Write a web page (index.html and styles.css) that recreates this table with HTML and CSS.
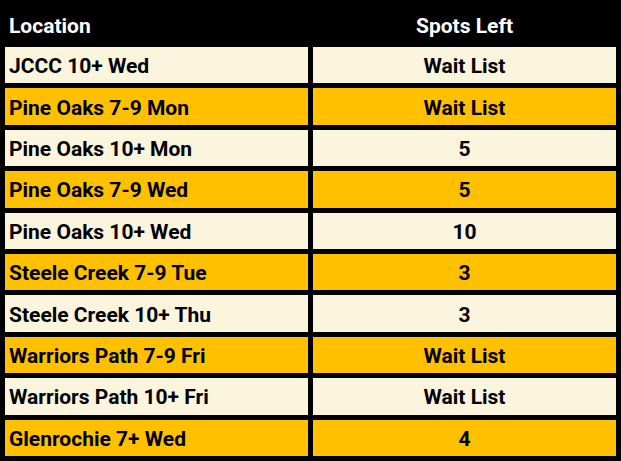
FILE: index.html
```html
<!DOCTYPE html>
<html>
<head>
<meta charset="utf-8">
<link rel="stylesheet" href="styles.css">
</head>
<body>
<div class="table">
  <div class="th left">Location</div>
  <div class="th center">Spots Left</div>

  <div class="td left light">JCCC 10+ Wed</div>
  <div class="td center light">Wait List</div>

  <div class="td left amber">Pine Oaks 7-9 Mon</div>
  <div class="td center amber">Wait List</div>

  <div class="td left light">Pine Oaks 10+ Mon</div>
  <div class="td center light">5</div>

  <div class="td left amber">Pine Oaks 7-9 Wed</div>
  <div class="td center amber">5</div>

  <div class="td left light">Pine Oaks 10+ Wed</div>
  <div class="td center light">10</div>

  <div class="td left amber">Steele Creek 7-9 Tue</div>
  <div class="td center amber">3</div>

  <div class="td left light">Steele Creek 10+ Thu</div>
  <div class="td center light">3</div>

  <div class="td left amber">Warriors Path 7-9 Fri</div>
  <div class="td center amber">Wait List</div>

  <div class="td left light">Warriors Path 10+ Fri</div>
  <div class="td center light">Wait List</div>

  <div class="td left amber">Glenrochie 7+ Wed</div>
  <div class="td center amber">4</div>
</div>
</body>
</html>
```
FILE: styles.css
```css
html, body {
  margin: 0;
  padding: 0;
  background: #000;
}
.table {
  box-sizing: border-box;
  width: 621px;
  height: 461px;
  display: grid;
  grid-template-columns: 1fr 1fr;
  grid-template-rows: 37px repeat(10, 1fr);
  gap: 5px;
  padding: 5px;
  background: #000;
  font-family: Roboto, "Liberation Sans", sans-serif;
  font-weight: 700;
  font-size: 21px;
}
.th, .td {
  display: flex;
  align-items: center;
  padding: 2px 4px 0;
}
.th {
  color: #fff;
  padding-top: 4px;
}
.td {
  color: #000;
}
.left { justify-content: flex-start; }
.center { justify-content: center; }
.light { background: #faf5dc; }
.amber { background: #ffc000; }
```
